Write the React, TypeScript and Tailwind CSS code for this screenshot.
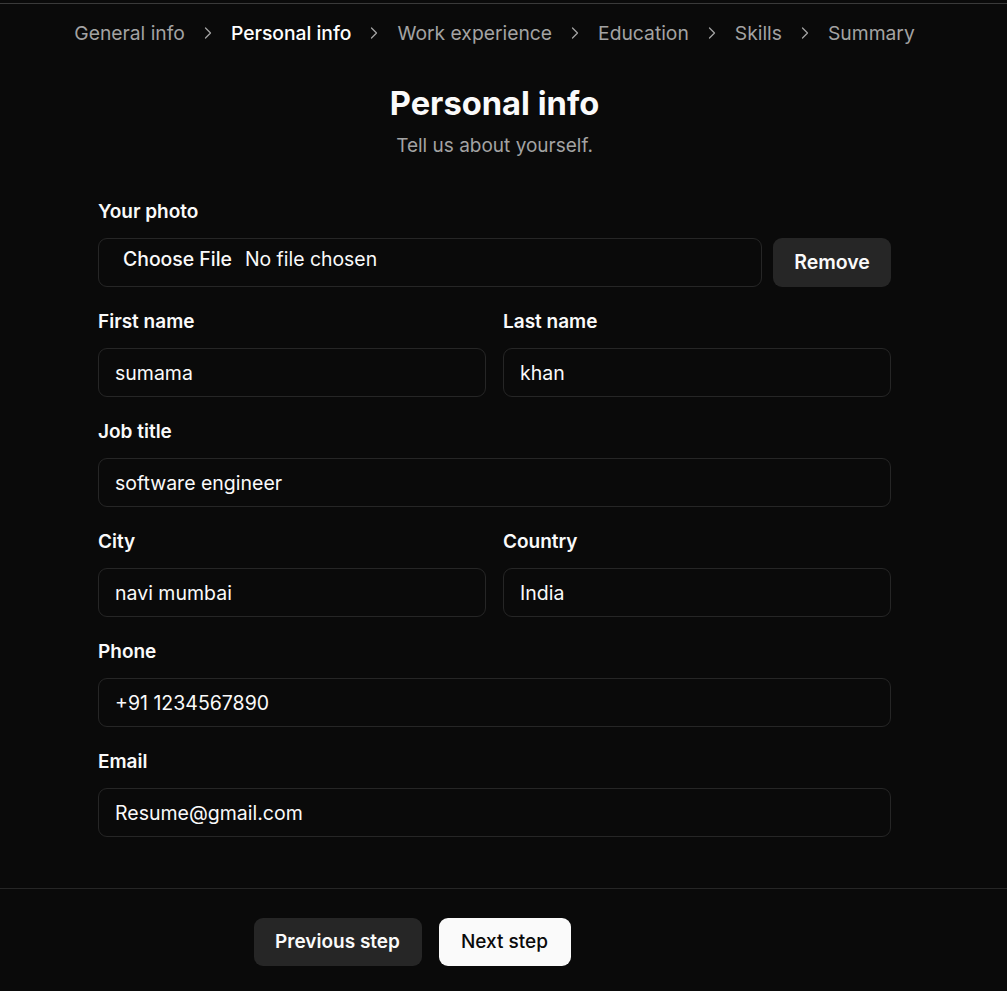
import { ChevronRight } from 'lucide-react';

const steps = ['General info', 'Personal info', 'Work experience', 'Education', 'Skills', 'Summary'];

const Field = ({ label, value }: { label: string; value: string }) => (
  <div className="flex flex-col gap-[15px]">
    <label className="text-[19px] leading-[22px] font-semibold text-[#fafafa]">{label}</label>
    <input
      readOnly
      value={value}
      className="h-[49px] w-full rounded-[9px] border border-[#262626] bg-[#0a0a0a] px-[16px] text-[19.5px] text-[#fafafa] outline-none"
    />
  </div>
);

export default function App() {
  return (
    <div
      className="min-h-[991px] w-full bg-[#0a0a0a] text-[#fafafa] flex flex-col"
      style={{ fontFamily: 'Inter, "Noto Sans", sans-serif' }}
    >
      <div className="h-[3px]" />
      <div className="h-px bg-[#3a3a3a]" />

      <div className="w-[989px] flex flex-col">
        {/* Steps */}
        <nav className="flex items-center justify-center pt-[16px] text-[19.3px] leading-[26px]">
          {steps.map((step, i) => (
            <div key={step} className="flex items-center">
              {i > 0 && (
                <ChevronRight className="mx-[13px] h-[20px] w-[20px] text-[#a3a3a3]" strokeWidth={1.5} />
              )}
              <span className={i === 1 ? 'font-medium text-white' : 'text-[#a3a3a3]'}>{step}</span>
            </div>
          ))}
        </nav>

        <div className="mt-[37px] text-center">
          <h1 className="text-[32.7px] leading-[40px] font-bold">Personal info</h1>
          <p className="mt-[10px] text-[19px] leading-[26px] text-[#a3a3a3]">Tell us about yourself.</p>
        </div>

        <form className="mx-auto mt-[42px] w-[793px] flex flex-col gap-[24px]">
          <div className="flex flex-col gap-[15px]">
            <label className="text-[19px] leading-[22px] font-semibold">Your photo</label>
            <div className="flex gap-[11px]">
              <div className="flex-1 h-[49px] rounded-[9px] border border-[#262626] flex items-center pl-[24px] pb-[5px] text-[19.4px]">
                <span className="font-medium">Choose File</span>
                <span className="ml-[13px]">No file chosen</span>
              </div>
              <button
                type="button"
                className="w-[118px] h-[49px] rounded-[9px] bg-[#262626] text-[19.5px] font-semibold"
              >
                Remove
              </button>
            </div>
          </div>

          <div className="grid grid-cols-2 gap-x-[17px]">
            <Field label="First name" value="sumama" />
            <Field label="Last name" value="khan" />
          </div>
          <Field label="Job title" value="software engineer" />
          <div className="grid grid-cols-2 gap-x-[17px]">
            <Field label="City" value="navi mumbai" />
            <Field label="Country" value="India" />
          </div>
          <Field label="Phone" value="+91 1234567890" />
          <Field label="Email" value="Resume@gmail.com" />
        </form>
      </div>

      <div className="mt-[51px] h-px bg-[#262626]" />
      <div className="w-[989px]">
        <div className="mx-auto w-[482px] flex gap-[17px] pt-[29px] pb-[24px]">
          <button className="h-[48px] w-[168px] rounded-[9px] bg-[#262626] text-[19px] font-semibold">
            Previous step
          </button>
          <button className="h-[48px] w-[132px] rounded-[9px] bg-[#fafafa] text-[19px] font-medium text-[#0a0a0a]">
            Next step
          </button>
        </div>
      </div>
    </div>
  );
}
